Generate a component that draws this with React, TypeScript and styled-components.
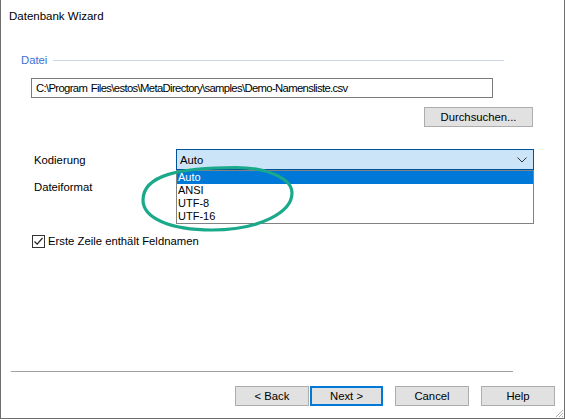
import React from "react";
import styled, { createGlobalStyle } from "styled-components";

const Global = createGlobalStyle`
  html, body { margin: 0; padding: 0; background: #ffffff; }
  * { box-sizing: border-box; }
`;

const FONT = `"Liberation Sans", Arial, sans-serif`;

const Window = styled.div`
  position: relative;
  width: 565px;
  height: 419px;
  background: #ffffff;
  border-left: 1px solid #6e6e6e;
  border-right: 1px solid #6e6e6e;
  border-bottom: 1px solid #6e6e6e;
  display: flex;
  flex-direction: column;
  font-family: ${FONT};
  font-size: 11.3px;
  color: #000000;
`;

const TitleBar = styled.div`
  height: 44px;
  padding: 8px 0 0 8px;
  line-height: 16px;
  font-size: 11.5px;
`;

const Content = styled.div`
  padding-left: 20px;
  display: flex;
  flex-direction: column;
`;

const GroupHeader = styled.div`
  display: flex;
  align-items: center;
  gap: 6px;
  width: 483px;
  line-height: 16px;
  margin-top: 8px;
`;

const GroupLabel = styled.span`
  color: #3d6fd6;
`;

const GroupLine = styled.div`
  flex: 1;
  height: 1px;
  background: #ccd7e4;
`;

const PathInput = styled.div`
  margin: 10px 0 0 10px;
  width: 462px;
  height: 20px;
  border: 1px solid #7a7a7a;
  padding-left: 4px;
  line-height: 18px;
  letter-spacing: -0.65px;
  word-spacing: 1px;
  white-space: nowrap;
  overflow: hidden;
`;

const BrowseRow = styled.div`
  display: flex;
  justify-content: flex-end;
  width: 512px;
  margin-top: 9px;
`;

const Button = styled.div<{ $default?: boolean; $w?: number }>`
  width: ${(p) => p.$w ?? 74}px;
  height: 20px;
  background: #e1e1e1;
  border: ${(p) => (p.$default ? "2px solid #0078d7" : "1px solid #adadad")};
  display: flex;
  align-items: center;
  justify-content: center;
  line-height: 16px;
`;

const FieldRow = styled.div<{ $top: number }>`
  display: flex;
  align-items: center;
  margin-top: ${(p) => p.$top}px;
  margin-left: 13px;
  line-height: 16px;
`;

const FieldLabel = styled.span`
  width: 142px;
`;

const ComboWrap = styled.div`
  position: relative;
  width: 358px;
`;

const Combo = styled.div`
  height: 21px;
  background: #cce4f7;
  border: 1px solid #005499;
  display: flex;
  align-items: center;
  justify-content: space-between;
  padding: 0 6px 0 3px;
`;

const DropList = styled.div`
  position: absolute;
  left: 0;
  top: 21px;
  width: 358px;
  height: 54px;
  background: #ffffff;
  border: 1px solid #828282;
  display: flex;
  flex-direction: column;
  font-size: 11px;
  z-index: 2;
`;

const DropItem = styled.div<{ $sel?: boolean }>`
  height: 13px;
  line-height: 13px;
  padding-left: 1px;
  background: ${(p) => (p.$sel ? "#0078d7" : "transparent")};
  color: ${(p) => (p.$sel ? "#ffffff" : "#000000")};
`;

const CheckRow = styled.div`
  display: flex;
  align-items: center;
  gap: 3px;
  margin: 38px 0 0 11px;
  line-height: 16px;
`;

const CheckBox = styled.div`
  width: 13px;
  height: 13px;
  border: 1px solid #333333;
  background: #ffffff;
  display: flex;
  align-items: center;
  justify-content: center;
`;

const Spacer = styled.div`
  flex: 1;
`;

const Separator = styled.div`
  margin-left: 10px;
  width: 502px;
  height: 1px;
  background: #a0a0a0;
`;

const ButtonRow = styled.div`
  display: flex;
  justify-content: flex-end;
  padding: 14px 9px 12px 0;
`;

const ButtonGroup = styled.div<{ $gap: number }>`
  display: flex;
  gap: ${(p) => p.$gap}px;
  margin-left: 12px;
`;

const Grip = styled.svg`
  position: absolute;
  right: 0;
  bottom: 0;
`;

const Annotation = styled.svg`
  position: absolute;
  left: -1px;
  top: 0;
  pointer-events: none;
  z-index: 5;
`;

export default function App() {
  return (
    <>
      <Global />
      <Window>
        <TitleBar>Datenbank Wizard</TitleBar>
        <Content>
          <GroupHeader>
            <GroupLabel>Datei</GroupLabel>
            <GroupLine />
          </GroupHeader>
          <PathInput>C:\Program Files\estos\MetaDirectory\samples\Demo-Namensliste.csv</PathInput>
          <BrowseRow>
            <Button $w={109}>Durchsuchen...</Button>
          </BrowseRow>
          <FieldRow $top={22}>
            <FieldLabel>Kodierung</FieldLabel>
            <ComboWrap>
              <Combo>
                <span>Auto</span>
                <svg width="10" height="6" viewBox="0 0 10 6">
                  <path d="M0.5 0.5 L5 5 L9.5 0.5" fill="none" stroke="#333" strokeWidth="1" />
                </svg>
              </Combo>
              <DropList>
                <DropItem $sel>Auto</DropItem>
                <DropItem>ANSI</DropItem>
                <DropItem>UTF-8</DropItem>
                <DropItem>UTF-16</DropItem>
              </DropList>
            </ComboWrap>
          </FieldRow>
          <FieldRow $top={9}>
            <FieldLabel>Dateiformat</FieldLabel>
          </FieldRow>
          <CheckRow>
            <CheckBox>
              <svg width="11" height="11" viewBox="0 0 11 11">
                <path d="M1.5 5.5 L4.2 8.2 L9.5 2" fill="none" stroke="#222" strokeWidth="1.2" />
              </svg>
            </CheckBox>
            <span>Erste Zeile enthält Feldnamen</span>
          </CheckRow>
        </Content>
        <Spacer />
        <Separator />
        <ButtonRow>
          <ButtonGroup $gap={1}>
            <Button>&lt; Back</Button>
            <Button $default $w={73}>Next &gt;</Button>
          </ButtonGroup>
          <ButtonGroup $gap={12}>
            <Button>Cancel</Button>
            <Button>Help</Button>
          </ButtonGroup>
        </ButtonRow>
        <Grip width="10" height="10" viewBox="0 0 10 10">
          <path d="M9 2 L2 9 M9 5 L5 9 M9 8 L8 9" stroke="#b0b0b0" strokeWidth="1" />
        </Grip>
        <Annotation width="565" height="419" viewBox="0 0 565 419">
          <path
            d="M143 200 C143 175 180 167.5 236 167.5 C266 167.5 292 178 292 193 C292 212 260 230 212 230 C170 230 143 218 143 200 Z"
            fill="none"
            stroke="#1aa98a"
            strokeWidth="3.2"
          />
        </Annotation>
      </Window>
    </>
  );
}
